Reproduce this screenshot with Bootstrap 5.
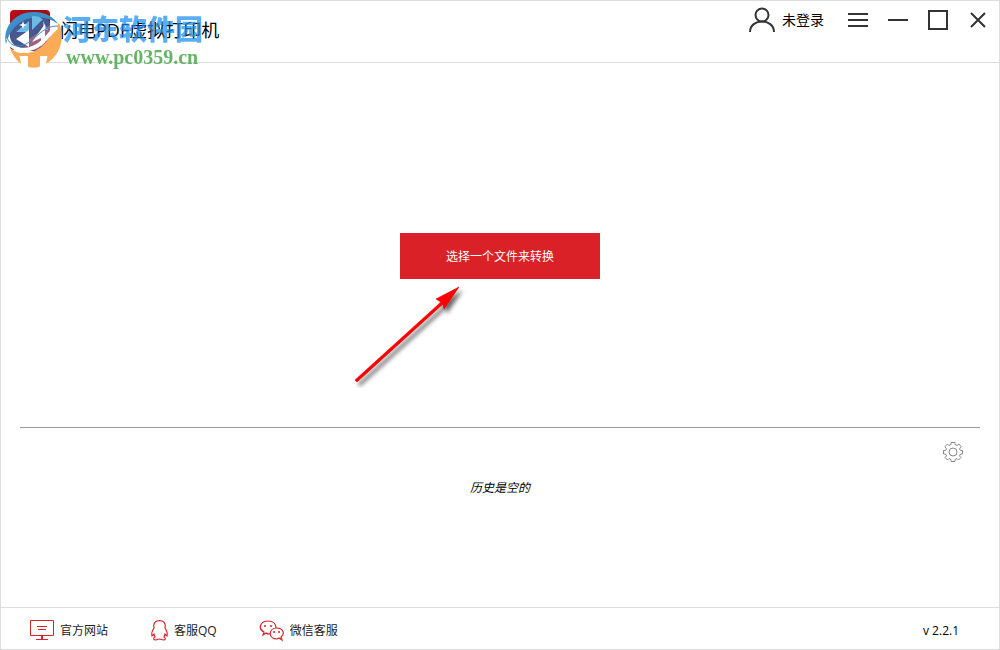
<!DOCTYPE html>
<html lang="zh-CN">
<head>
<meta charset="utf-8">
<meta name="viewport" content="width=device-width, initial-scale=1">
<title>闪电PDF虚拟打印机</title>
<link href="https://cdn.jsdelivr.net/npm/bootstrap@5.3.0/dist/css/bootstrap.min.css" rel="stylesheet">
<style>
  body { font-family: "Open Sans", "Noto Sans CJK SC", sans-serif; font-size: 12px; line-height: 18px; color: #000; background: #fff; }
  .window { border: 1px solid #dcdcdc; }
  .titlebar { height: 62px; border-bottom: 1px solid #dcdcdc; }
  .app-title { font-size: 18px; line-height: 24px; font-weight: 400; margin: 17px 0 0 10px; }
  .app-logo { margin: 9px 0 0 9px; }
  .stamp { left: 0; top: 0; pointer-events: none; }
  .stamp-name { left: 62px; top: 9px; font: 900 28px/36px "Noto Sans CJK SC", sans-serif; color: #1e90f0; opacity: .72; }
  .stamp-site { left: 65px; top: 45px; font: bold 20px/22px "Liberation Serif", serif; color: #4ca94c; opacity: .85; }
  .tool { display: block; padding: 0; border: 0; background: none; color: #000; line-height: 0; }
  .account { display: flex; align-items: center; gap: 7px; font-size: 14px; line-height: 20px; margin: -3px 4px 0 0; }
  .tools { gap: 20px; padding: 9px 11px 0 0; }
  .pick { width: 200px; height: 46px; border: 0; border-radius: 0; background: #da2127; color: #fff; font-size: 12px; padding: 2px 0 0; }
  .pick:hover { background: #c31c22; color: #fff; }
  .drop-zone { padding-top: 170px; }
  .pointer { left: -52px; top: 45px; pointer-events: none; }
  .history { height: 180px; margin: 0 19px; border-top: 1px solid #999; }
  .history-tools { padding: 14px 17px 0 0; }
  .empty-note { margin: 17px 0 0; font-style: italic; }
  .statusbar { height: 42px; border-top: 1px solid #dcdcdc; padding: 4px 40px 0 28px; }
  .statusbar a { color: #222; text-decoration: none; gap: 5px; }
  .statusbar nav { gap: 42px; }
</style>
</head>
<body>
<div class="window d-flex flex-column min-vh-100">
  <header class="titlebar d-flex align-items-start position-relative">
    <svg class="app-logo flex-shrink-0" width="40" height="40" viewBox="0 0 40 40" aria-hidden="true">
      <defs><linearGradient id="red" x1="0" y1="0" x2="1" y2="1"><stop offset="0" stop-color="#c01018"/><stop offset=".3" stop-color="#a00a12"/><stop offset="1" stop-color="#c90a12"/></linearGradient></defs>
      <rect width="40" height="40" rx="4" fill="url(#red)"/>
    </svg>
    <h1 class="app-title text-nowrap mb-0">闪电PDF虚拟打印机</h1>

    <div class="stamp position-absolute">
      <svg width="64" height="70" viewBox="0 0 64 70" aria-hidden="true">
        <path d="M9 38c0-14 10-26 24-26 9 0 14 4 16 10v25q0 3-3 3H18C12 48 9 44 9 38z" fill="#47578f"/>
        <path d="M28 38 49 24v22q0 3-3 3H22z" fill="#a3617f"/>
        <path d="M9 47c9 8 21 6 30 0 9-7 13-17 19-25 7 15 1 39-22 44-13 2-22-5-27-19z" fill="#f9ab56"/>
        <path d="M5 43C1 27 14 10 34 11c10 0 19 5 23 12-8-6-17-8-26-6C18 19 9 28 5 43z" fill="#3d8fc9"/>
        <path d="M15 31 28 20v11zM31 15q8 0 10 3l6 11h-5V18L31 29z" fill="#6bbce4"/>
        <path d="m15 38 13-9v17zM31 41l13-18v18l-4 4v-8z" fill="#fff"/>
        <path d="m22 20 1 3 3 1-3 1-1 3-1-3-3-1 3-1z" fill="#fff"/>
        <path d="M7 37c3 14 18 14 29 8 9-5 13-14 20-19" fill="none" stroke="#fff" stroke-width="4"/>
        <path d="M6 36c3 11 14 11 22 5 10-7 16-16 28-16" fill="none" stroke="#3d8fc9" stroke-width="1"/>
        <path d="M18 53h9v14h-6zM39 53h8l-3 14h-5z" fill="#fff"/>
        <path d="M18 52h31v3H18zM28 54h10v12q-5 1-10 0z" fill="#f9ab56"/>
      </svg>
      <span class="stamp-name position-absolute text-nowrap">河东软件园</span>
      <span class="stamp-site position-absolute text-nowrap">www.pc0359.cn</span>
    </div>

    <div class="tools d-flex align-items-start ms-auto">
      <button type="button" class="tool account text-nowrap">
        <svg width="26" height="26" viewBox="0 0 26 26" fill="none" stroke="#333" stroke-width="2" aria-hidden="true"><circle cx="13" cy="8" r="6.500"/><path d="M1 25c0-14 24-14 24 0"/></svg>
        未登录
      </button>
      <button type="button" class="tool" aria-label="菜单"><svg width="20" height="20" stroke="#333" stroke-width="2"><path d="M0 4h20M0 10h20M0 16h20"/></svg></button>
      <button type="button" class="tool" aria-label="最小化"><svg width="20" height="20" stroke="#333" stroke-width="2"><path d="M0 10h20"/></svg></button>
      <button type="button" class="tool" aria-label="最大化"><svg width="20" height="20" fill="none" stroke="#333" stroke-width="2"><path d="M1 1h18v18H1z"/></svg></button>
      <button type="button" class="tool" aria-label="关闭"><svg width="20" height="20" stroke="#333" stroke-width="2"><path d="m3 3 14 14M17 3 3 17"/></svg></button>
    </div>
  </header>

  <main class="flex-grow-1 d-flex flex-column">
    <section class="drop-zone flex-grow-1 text-center">
      <div class="d-inline-block position-relative">
        <button type="button" class="btn pick">选择一个文件来转换</button>
        <svg class="pointer position-absolute" width="124" height="110" viewBox="0 0 124 110" aria-hidden="true">
          <defs><filter id="shade" x="-20%" y="-20%" width="140%" height="140%"><feDropShadow dx="3" dy="4" stdDeviation="2" flood-color="#000" flood-opacity=".6"/></filter></defs>
          <path filter="url(#shade)" d="M111 9 88 21l5 3L7 102l2 2 86-78 1 5z" fill="#f00" stroke="#d00" stroke-width=".6"/>
        </svg>
      </div>
    </section>
    <section class="history">
      <div class="history-tools d-flex justify-content-end">
        <button type="button" class="tool" aria-label="设置">
          <svg width="20" height="20" viewBox="0 0 20 20" fill="none" stroke="#888" aria-hidden="true"><circle cx="10" cy="10" r="4"/><path d="M8 .5h4v2l2 1 2-1.500L18 4.500 16.500 7l1 1.500h2v3.500h-2l-1 2 1.500 1.500-2.500 2.500-1.500-1.500-2 1v2H8v-2l-2-1L4.500 18 2 15.500 3.500 14l-1-2h-2V8.500h2L3.500 7 2 4.500 4.500 2 6 3.500l2-1z"/></svg>
        </button>
      </div>
      <p class="empty-note text-center">历史是空的</p>
    </section>
  </main>

  <footer class="statusbar d-flex align-items-center justify-content-between">
    <nav class="d-flex align-items-center">
      <a href="#" class="d-flex align-items-center"><svg width="26" height="22" viewBox="0 0 26 22" fill="none" stroke="#da2127" aria-hidden="true"><path d="M1.500 .5h23v15h-23zM8 6.500h10M9 9.500h8M7 19.500h12"/><path d="M13 16v3" stroke-width="2"/></svg>官方网站</a>
      <a href="#" class="d-flex align-items-center"><svg width="19" height="22" viewBox="0 1 19 22" fill="none" stroke="#da2127" stroke-width="1.200" aria-hidden="true"><path d="M4 9C3 3 6 1.700 9.500 1.700S16 3 15 9c2 3 3 5 2 8l-2-2-1 3c2 1 2 3-1 3-1 0-2-1-3.500-1S7 21 6 21c-3 0-3-2-1-3l-1-3-2 2c-1-3 0-5 2-8z"/></svg>客服QQ</a>
      <a href="#" class="d-flex align-items-center"><svg width="26" height="22" viewBox="0 0 26 22" fill="none" stroke="#da2127" stroke-width="1.200" aria-hidden="true"><path d="M11 14c-2 0-3 0-4-1l-3 2 1-3C-2 8 2 1 9 1c5 0 8 3 8 7M18 8c-9 0-9 11 0 11l2-1 3 2-1-3c5-4 1-9-4-9z"/><g fill="#da2127" stroke="none"><circle cx="6" cy="6" r="1"/><circle cx="12" cy="6" r="1"/><circle cx="15" cy="12" r="1"/><circle cx="20" cy="12" r="1"/></g></svg>微信客服</a>
    </nav>
    <span>v 2.2.1</span>
  </footer>
</div>
<script src="https://cdn.jsdelivr.net/npm/bootstrap@5.3.0/dist/js/bootstrap.bundle.min.js"></script>
</body>
</html>
